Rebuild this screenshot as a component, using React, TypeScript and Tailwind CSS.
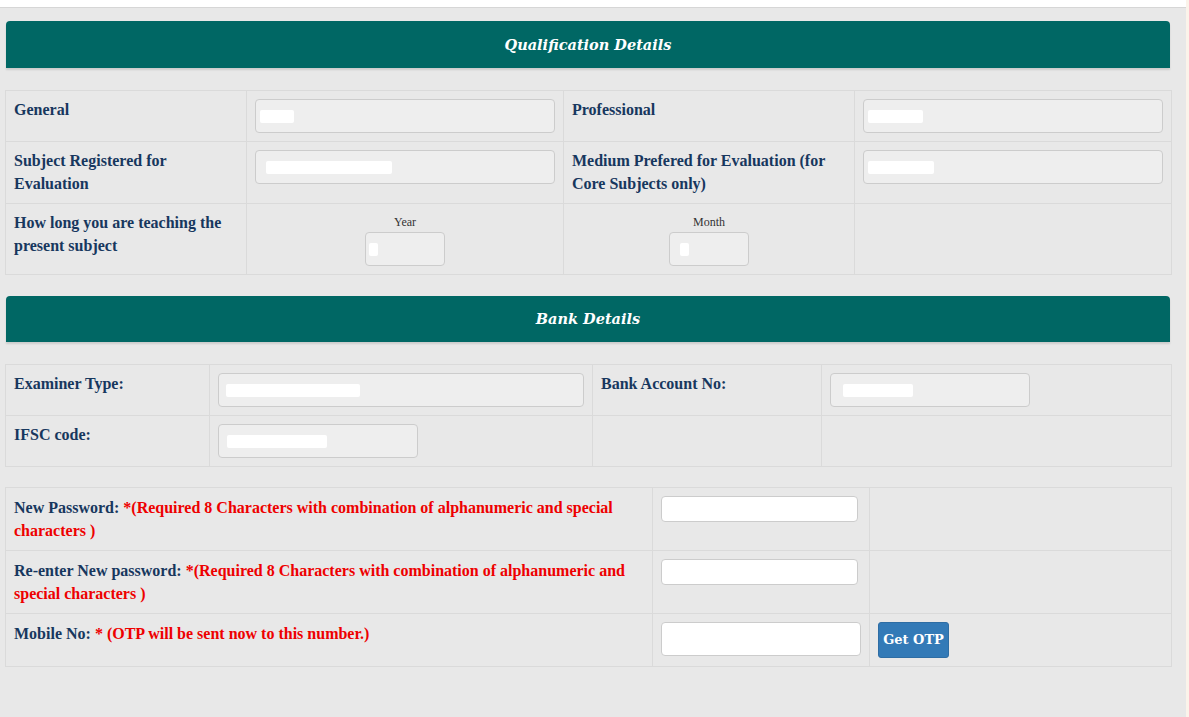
import React from 'react';

const serif = { fontFamily: '"Liberation Serif", "Times New Roman", serif' };

function SectionHeader({ title, h = 'h-[47px]' }: { title: string; h?: string }) {
  return (
    <div className={`mx-[1px] ${h} rounded-t-[4px] bg-[#006764] shadow-[0_2px_2px_rgba(0,0,0,0.12)] flex items-center justify-center`}>
      <span
        className="text-white font-bold italic text-[14.5px]"
        style={{ fontFamily: '"DejaVu Serif", Georgia, serif' }}
      >
        {title}
      </span>
    </div>
  );
}

// grey filled box with a white redaction blob inside
function FilledInput({ w, blob, blobLeft = 4 }: { w?: string; blob: number; blobLeft?: number }) {
  return (
    <div className={`${w ?? 'w-full'} h-[34px] rounded-[4px] border border-[#cccccc] bg-[#eeeeee] flex items-center`}>
      <div className="h-[13px] bg-white rounded-[2px]" style={{ width: blob, marginLeft: blobLeft }} />
    </div>
  );
}

function EmptyInput({ w = 'w-[197px]', h = 'h-[26px]' }: { w?: string; h?: string }) {
  return <div className={`${w} ${h} rounded-[4px] border border-[#cccccc] bg-white`} />;
}

const cell = 'border border-[#dadada] px-2 pt-2 pb-2 align-top';
const label = 'text-[16px] leading-[22.5px] font-bold text-[#17375e]';
const label3 = 'text-[16px] leading-[23px] font-bold text-[#17375e]';

export default function App() {
  return (
    <div className="w-[1189px] h-[717px] flex bg-[#fbf3ea]" style={serif}>
      <div className="w-[1186px] h-[717px] flex flex-col">
        <div className="h-[8px] bg-white border-b border-[#d6d6d6]" />
        <div className="flex-1 bg-[#e8e8e8] pl-[5px] pr-[15px] pt-[13px]">
          <SectionHeader title="Qualification Details" />

          <table className="mt-[22px] w-[1166px] border-collapse table-fixed">
            <colgroup>
              <col className="w-[241px]" />
              <col className="w-[317px]" />
              <col className="w-[291px]" />
              <col className="w-[317px]" />
            </colgroup>
            <tbody>
              <tr>
                <td className={cell}><div className={label}>General</div></td>
                <td className={cell}><FilledInput blob={34} /></td>
                <td className={cell}><div className={label}>Professional</div></td>
                <td className={cell}><FilledInput blob={55} /></td>
              </tr>
              <tr>
                <td className={cell}><div className={label}>Subject Registered for Evaluation</div></td>
                <td className={cell}><FilledInput blob={126} blobLeft={10} /></td>
                <td className={cell}><div className={label}>Medium Prefered for Evaluation (for Core Subjects only)</div></td>
                <td className={cell}><FilledInput blob={66} blobLeft={4} /></td>
              </tr>
              <tr>
                <td className={cell}><div className={label}>How long you are teaching the present subject</div></td>
                <td className={cell}>
                  <div className="flex flex-col items-center">
                    <div className="text-[12px] leading-[20px] text-[#333333]">Year</div>
                    <FilledInput w="w-[80px]" blob={9} blobLeft={3} />
                  </div>
                </td>
                <td className={cell}>
                  <div className="flex flex-col items-center">
                    <div className="text-[12px] leading-[20px] text-[#333333]">Month</div>
                    <FilledInput w="w-[80px]" blob={9} blobLeft={10} />
                  </div>
                </td>
                <td className={cell}></td>
              </tr>
            </tbody>
          </table>

          <div className="mt-[21px]">
            <SectionHeader title="Bank Details" h="h-[46px]" />
          </div>

          <table className="mt-[22px] w-[1166px] border-collapse table-fixed">
            <colgroup>
              <col className="w-[204px]" />
              <col className="w-[383px]" />
              <col className="w-[229px]" />
              <col className="w-[350px]" />
            </colgroup>
            <tbody>
              <tr>
                <td className={cell}><div className={label}>Examiner Type:</div></td>
                <td className={cell}><FilledInput blob={134} blobLeft={7} /></td>
                <td className={cell}><div className={label}>Bank Account No:</div></td>
                <td className={cell}><FilledInput w="w-[200px]" blob={70} blobLeft={12} /></td>
              </tr>
              <tr>
                <td className={cell}><div className={label}>IFSC code:</div></td>
                <td className={cell}><FilledInput w="w-[200px]" blob={100} blobLeft={8} /></td>
                <td className={cell}></td>
                <td className={cell}></td>
              </tr>
            </tbody>
          </table>

          <table className="mt-[20px] w-[1166px] border-collapse table-fixed">
            <colgroup>
              <col className="w-[647px]" />
              <col className="w-[217px]" />
              <col className="w-[302px]" />
            </colgroup>
            <tbody>
              <tr>
                <td className={cell}>
                  <div className={label3}>
                    New Password: <span className="text-[#ee0000]">*(Required 8 Characters with combination of alphanumeric and special characters )</span>
                  </div>
                </td>
                <td className={cell}><EmptyInput /></td>
                <td className={cell}></td>
              </tr>
              <tr>
                <td className={cell}>
                  <div className={label3}>
                    Re-enter New password: <span className="text-[#ee0000]">*(Required 8 Characters with combination of alphanumeric and special characters )</span>
                  </div>
                </td>
                <td className={cell}><EmptyInput /></td>
                <td className={cell}></td>
              </tr>
              <tr>
                <td className={cell}>
                  <div className={label3}>
                    Mobile No: <span className="text-[#ee0000]">* (OTP will be sent now to this number.)</span>
                  </div>
                </td>
                <td className={cell}><EmptyInput w="w-[200px]" h="h-[34px]" /></td>
                <td className={cell}>
                  <button
                    className="h-[36px] w-[71px] rounded-[3px] bg-[#337ab7] border border-[#2e6da4] text-white font-bold text-[13px]"
                    style={{ fontFamily: '"DejaVu Serif", Georgia, serif' }}
                  >
                    Get OTP
                  </button>
                </td>
              </tr>
            </tbody>
          </table>
        </div>
      </div>
    </div>
  );
}
